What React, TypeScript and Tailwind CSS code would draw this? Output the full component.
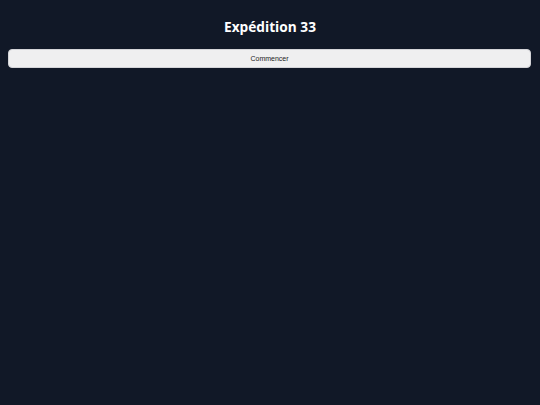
export default function App() {
  return (
    <div className="min-h-screen bg-[#111827] px-2 pt-[18px]">
      <h1 className="text-center text-[13.7px] font-bold leading-[17px] text-white [font-family:'Open_Sans',sans-serif]">
        Expédition 33
      </h1>
      <button className="mt-[14px] flex h-[19px] w-[523px] items-center justify-center rounded-[4px] border border-[#d4d4d8] bg-[#efeff0] pt-[2px] text-[7px] text-[#222] [font-family:'Liberation_Sans',Arial,sans-serif]">
        Commencer
      </button>
    </div>
  );
}
